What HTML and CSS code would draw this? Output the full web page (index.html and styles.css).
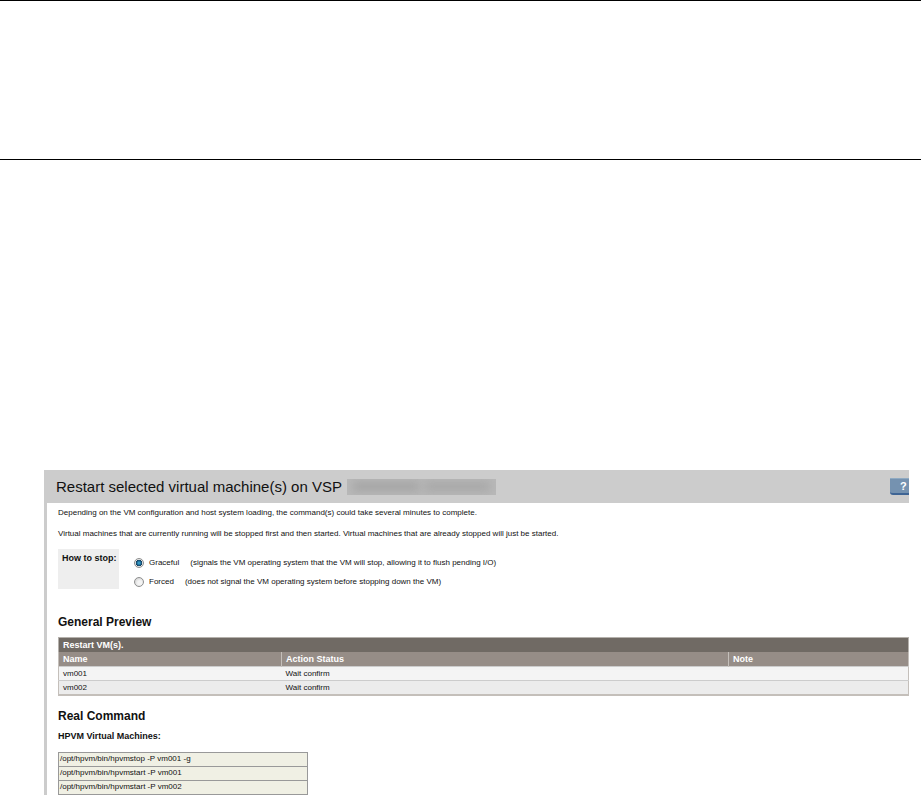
FILE: index.html
```html
<!DOCTYPE html>
<html lang="en">
<head>
    <meta charset="UTF-8">
    <meta name="viewport" content="width=device-width, initial-scale=1.0">
    <title>Restart virtual machines</title>
    <link rel="stylesheet" href="styles.css">
</head>
<body>

<div class="banner"></div>

<main class="panel">
    <header class="panel-header">
        <h1>Restart selected virtual machine(s) on VSP</h1>
        <span class="host-mask"><span class="smudge smudge-long"></span><span class="smudge smudge-short"></span></span>
        <button type="button" class="help">?</button>
    </header>

    <div class="panel-body">
        <p>Depending on the VM configuration and host system loading, the command(s) could take several minutes to complete.</p>
        <p>Virtual machines that are currently running will be stopped first and then started. Virtual machines that are already stopped will just be started.</p>

        <form class="stop-form">
            <div class="stop-label" id="stopLabel">How to stop:</div>
            <div class="stop-options" role="radiogroup" aria-labelledby="stopLabel">
                <label><input type="radio" name="stop" value="graceful" checked><span>Graceful</span><span class="hint">(signals the VM operating system that the VM will stop, allowing it to flush pending I/O)</span></label>
                <label><input type="radio" name="stop" value="forced"><span>Forced</span><span class="hint">(does not signal the VM operating system before stopping down the VM)</span></label>
            </div>
        </form>

        <h2>General Preview</h2>
        <table class="preview">
            <caption>Restart VM(s).</caption>
            <thead>
                <tr><th class="col-name">Name</th><th class="col-status">Action Status</th><th>Note</th></tr>
            </thead>
            <tbody>
                <tr><td>vm001</td><td>Wait confirm</td><td></td></tr>
                <tr><td>vm002</td><td>Wait confirm</td><td></td></tr>
            </tbody>
        </table>

        <h2>Real Command</h2>
        <h3>HPVM Virtual Machines:</h3>
        <table class="commands">
            <tr><td>/opt/hpvm/bin/hpvmstop -P vm001 -g</td></tr>
            <tr><td>/opt/hpvm/bin/hpvmstart -P vm001</td></tr>
            <tr><td>/opt/hpvm/bin/hpvmstart -P vm002</td></tr>
        </table>
    </div>
</main>

</body>
</html>
```
FILE: styles.css
```css
* { margin: 0; padding: 0; box-sizing: border-box; }

body { background: #fff; color: #111; font-family: "Liberation Sans", Arial, sans-serif; font-size: 8px; line-height: 12px; }

.banner { height: 160px; border-top: 1px solid #000; border-bottom: 1px solid #000; }

.panel { margin: 310px 12px 0 44px; border-left: 3px solid #ccc; }

.panel-header { display: flex; align-items: center; height: 33px; padding-left: 9px; background: #ccc; }

h1 { font-size: 15px; line-height: 20px; font-weight: normal; white-space: nowrap; }

/* blurred-out host name */
.host-mask { display: flex; align-items: center; gap: 6px; width: 149px; height: 16px; margin-left: 5px; padding: 0 6px; background: #b8b8b8; overflow: hidden; }
.smudge { height: 9px; background: #a4a4a4; filter: blur(4px); }
.smudge-long { width: 66px; }
.smudge-short { width: 65px; background: #a7a7a7; }

.help { width: 19px; height: 17px; margin-left: auto; padding-left: 10px; border: 0; border-top: 1px solid #8faac2; border-bottom: 2px solid #3f6595; border-bottom-left-radius: 3px; background: #7592b0; color: #fff; font: bold 11px/14px "Liberation Sans", Arial, sans-serif; text-align: left; }

.panel-body { padding: 4px 0 2px 11px; }

p { margin-bottom: 9px; }

.stop-form { display: flex; margin-bottom: 26px; }
.stop-label { width: 61px; height: 40px; padding: 3px 4px; background: #eee; font-size: 9px; font-weight: bold; white-space: nowrap; }
.stop-options { display: flex; flex-direction: column; gap: 7px; padding: 8px 0 0 15px; }
.stop-options label { display: flex; align-items: center; }

input[type="radio"] { appearance: none; width: 10px; height: 10px; margin-right: 5px; border: 1px solid #8e8f8f; border-radius: 50%; background: radial-gradient(circle at 60% 60%, #f4f4f4 30%, #c8c8c8 100%); }
input[type="radio"]:checked { background: radial-gradient(circle, #48b4dc 0, #1c6a96 2px, #143c5a 3px, #e4e4e4 3px); }

.hint { margin-left: 11px; }

h2 { font-size: 12px; line-height: 14px; }
h3 { margin: 7px 0 10px; font-size: 9px; line-height: 12px; }

.preview { width: 100%; margin: 8px 0 13px; border-collapse: collapse; table-layout: fixed; border: 1px solid #c4bfba; border-top: 0; border-bottom-width: 2px; }
.preview caption { height: 15px; padding: 1px 4px 0; border: 1px solid #b5b1ac; border-bottom: 0; background: #706a64; color: #fff; font-size: 9px; font-weight: bold; text-align: left; }
.preview th { height: 14px; padding: 0 4px; border-left: 1px solid #c4bfba; background: #968d87; color: #fff; font-size: 9px; text-align: left; }
.preview td { height: 14px; padding: 1px 4px 0; border-top: 1px solid #ccc; background: #f4f4f4; }
.preview tr:last-child td { background: #ececec; }
.col-name { width: 223px; }
.col-status { width: 447px; }

.commands { width: 250px; border-collapse: collapse; }
.commands td { height: 14px; padding: 0 1px; border: 1px solid #999; background: #f0f0e4; }
```
